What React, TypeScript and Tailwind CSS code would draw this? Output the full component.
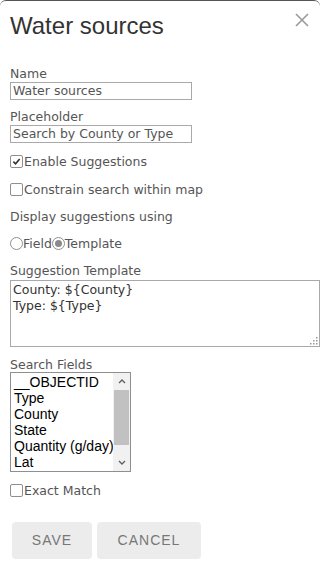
import { useState } from "react";

const fields = ["__OBJECTID", "Type", "County", "State", "Quantity (g/day)", "Lat"];

function Check({ checked }: { checked?: boolean }) {
  return (
    <span className="inline-flex h-[13px] w-[13px] items-center justify-center rounded-[2px] border border-[#8f8f8f] bg-white">
      {checked && (
        <svg viewBox="0 0 10 10" className="h-[9px] w-[9px]">
          <path d="M1.5 5.2 L4 7.6 L8.5 2.2" fill="none" stroke="#333" strokeWidth="1.8" />
        </svg>
      )}
    </span>
  );
}

function Radio({ checked }: { checked?: boolean }) {
  return (
    <span className="inline-flex h-[13px] w-[13px] items-center justify-center rounded-full border border-[#8f8f8f] bg-white">
      {checked && <span className="h-[7px] w-[7px] rounded-full bg-[#8a8a8a]" />}
    </span>
  );
}

export default function App() {
  const [name] = useState("Water sources");

  return (
    <div
      className="h-[570px] w-[320px] overflow-hidden rounded-t-[6px] border-t border-[#555] bg-white text-[#555]"
      style={{ fontFamily: '"DejaVu Sans", Verdana, sans-serif' }}
    >
      <div className="flex items-start justify-between pl-[10px] pr-[10px] pt-[10px]">
        <h1 className="text-[24px] leading-[30px] text-[#333]" style={{ fontFamily: '"Liberation Sans", Arial, sans-serif' }}>
          Water sources
        </h1>
        <svg viewBox="0 0 14 14" className="mr-[1px] mt-[2px] h-[14px] w-[14px]">
          <path d="M1 1 L13 13 M13 1 L1 13" stroke="#9a9a9a" strokeWidth="1.6" />
        </svg>
      </div>

      <div className="flex flex-col pl-[10px] pt-[25px] text-[12.5px]">
        <label className="leading-[15px]">Name</label>
        <div className="mt-[1px] h-[18px] w-[182px] border border-[#a9a9a9] px-[2px] leading-[16px]">{name}</div>

        <label className="mt-[9px] leading-[15px]">Placeholder</label>
        <div className="mt-[1px] h-[18px] w-[182px] border border-[#a9a9a9] px-[2px] leading-[16px]">Search by County or Type</div>

        <div className="mt-[11px] flex items-center gap-[1px] leading-[15px]">
          <Check checked />
          <span>Enable Suggestions</span>
        </div>
        <div className="mt-[13px] flex items-center gap-[1px] leading-[15px]">
          <Check />
          <span>Constrain search within map</span>
        </div>

        <div className="mt-[12px] leading-[15px]">Display suggestions using</div>
        <div className="mt-[12px] flex items-center leading-[15px]">
          <Radio />
          <span>Field</span>
          <Radio checked />
          <span>Template</span>
        </div>

        <label className="mt-[12px] leading-[15px]">Suggestion Template</label>
        <div className="relative mt-[2px] h-[67px] w-[310px] border border-[#a9a9a9] px-[2px] pt-[1px] text-[#333] leading-[16px]">
          <div>County: ${"{County}"}</div>
          <div>Type: ${"{Type}"}</div>
          <svg viewBox="0 0 8 8" className="absolute bottom-[1px] right-[1px] h-[8px] w-[8px]">
            <rect x="6" y="0" width="1.5" height="1.5" fill="#999" />
            <rect x="3" y="3" width="1.5" height="1.5" fill="#999" />
            <rect x="6" y="3" width="1.5" height="1.5" fill="#999" />
            <rect x="0" y="6" width="1.5" height="1.5" fill="#999" />
            <rect x="3" y="6" width="1.5" height="1.5" fill="#999" />
            <rect x="6" y="6" width="1.5" height="1.5" fill="#999" />
          </svg>
        </div>

        <label className="mt-[10px] leading-[15px]">Search Fields</label>
        <div className="flex h-[100px] w-[121px] border border-[#8f8f8f]">
          <div
            className="flex-1 overflow-hidden pl-[3px] pt-[1px] text-[14px] leading-[16px] text-black"
            style={{ fontFamily: '"Liberation Sans", Arial, sans-serif' }}
          >
            {fields.map((f) => (
              <div key={f} className="whitespace-nowrap">{f}</div>
            ))}
          </div>
          <div className="flex w-[17px] flex-col items-center bg-[#f1f1f1]">
            <svg viewBox="0 0 8 5" className="mt-[6px] h-[5px] w-[8px]">
              <path d="M1 4 L4 1 L7 4" fill="none" stroke="#606060" strokeWidth="1.4" />
            </svg>
            <div className="mt-[6px] h-[55px] w-[15px] bg-[#c1c1c1]" />
            <div className="flex-1" />
            <svg viewBox="0 0 8 5" className="mb-[6px] h-[5px] w-[8px]">
              <path d="M1 1 L4 4 L7 1" fill="none" stroke="#606060" strokeWidth="1.4" />
            </svg>
          </div>
        </div>

        <div className="mt-[11px] flex items-center gap-[1px] leading-[15px]">
          <Check />
          <span>Exact Match</span>
        </div>

        <div className="mt-[24px] flex gap-[5px] pl-[2px]" style={{ fontFamily: '"Liberation Sans", Arial, sans-serif' }}>
          <button className="h-[37px] w-[80px] rounded-[4px] bg-[#ececec] text-[14px] tracking-[1px] text-[#777]">SAVE</button>
          <button className="h-[37px] w-[104px] rounded-[4px] bg-[#ececec] text-[14px] tracking-[1px] text-[#777]">CANCEL</button>
        </div>
      </div>
    </div>
  );
}
